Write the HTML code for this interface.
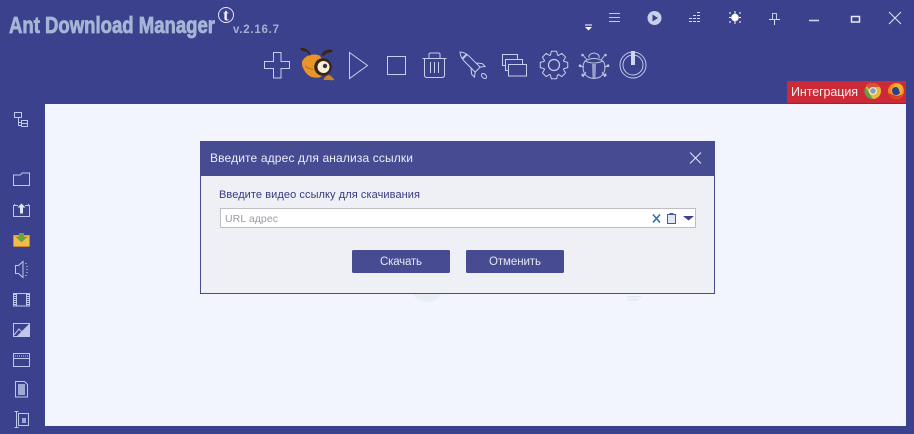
<!DOCTYPE html>
<html><head><meta charset="utf-8"><style>
html,body{margin:0;padding:0;width:914px;height:434px;overflow:hidden;background:#3c418d}
svg{display:block}
text{font-family:"Liberation Sans","Noto Sans CJK SC",sans-serif}
</style></head><body>
<svg width="914" height="434" viewBox="0 0 914 434" xmlns="http://www.w3.org/2000/svg">
<rect width="914" height="434" fill="#3c418d"/>
<rect x="45" y="104" width="861" height="322" fill="#f2f5fe"/>
<circle cx="427" cy="285" r="17" fill="#e9edf4"/>
<rect x="627" y="296" width="14" height="1.5" fill="#e4e8f0"/>
<rect x="627" y="299" width="12" height="1.5" fill="#e4e8f0"/>

<!-- title -->
<text x="9" y="33" font-size="23.500" font-weight="bold" fill="#a5b5d6" stroke="#a5b5d6" stroke-width=".8" textLength="206" lengthAdjust="spacingAndGlyphs">Ant Download Manager</text>
<circle cx="226" cy="15" r="7.500" fill="none" stroke="#e6eaf6" stroke-width="1"/>
<text x="226" y="20.500" font-size="17" font-weight="bold" fill="#eef0fa" text-anchor="middle" style="font-family:'Liberation Serif',serif">t</text>
<text x="233" y="33" font-size="11.500" font-weight="bold" fill="#a5b0cc" textLength="46">v.2.16.7</text>

<!-- window controls -->
<g stroke="#c3cae6" fill="none" stroke-width="1">
<path d="M609 13.500h11M609 17.500h11M609 21.500h11"/>
<path d="M689 21.500h3M693 21.500h3M697 21.500h3M689 18.500h3M693 18.500h3M697 18.500h3M693 15.500h3M697 15.500h3M697 12.500h3" stroke="#d6dbef"/>
<path d="M730 12v2M735 11v3M740 12v2M729 17.500h2M739 17.500h2M730 21v2M735 21v3M740 21v2" stroke="#fff"/>
<path d="M769 19.500h11M774.500 20v5" stroke="#e0e4f4"/>
<rect x="772.500" y="13.500" width="4" height="6"/>
<path d="M809 20.500h10" stroke="#d0d6ec" stroke-width="1.600"/>
<rect x="851.500" y="16.500" width="8" height="5.500" stroke="#e6eaf8" stroke-width="1.500"/>
<path d="M889 12l12 12M901 12l-12 12" stroke="#dfe3f4" stroke-width="1"/>
</g>
<path d="M585 24.500h7v1h-7zM585 27h7l-3.500 3.500z" fill="#fff"/>
<circle cx="654.500" cy="18" r="7" fill="#c8cfe8"/>
<path d="M652.500 14.500l5.500 3.500-5.500 3.500z" fill="#3c418d"/>
<circle cx="735" cy="17.500" r="3.800" fill="#fff"/>

<!-- toolbar -->
<g fill="none" stroke="#c7cfec" stroke-width="1">
<path d="M273.500 52.500h7.500v9h8.500v7h-8.500v9.500h-7.500v-9.500h-9v-7h9z"/>
<path d="M349.500 52.500l18 13-18 13z"/>
<rect x="387.500" y="56.500" width="18" height="18"/>
<path d="M422.500 58.500h24M429 58v-3.500q0-1.500 1.500-1.500h8q1.500 0 1.500 1.500v3.500M424.500 59v16q0 2.500 2.500 2.500h15q2.500 0 2.500-2.500v-16M430.500 62v11M434.500 62v11M438.500 62v11"/>
<g transform="translate(472 64) rotate(-45)">
<path d="M0 -17q-3.500 4-3.500 10v15h7v-15q0-6-3.500-10zM-3.500 2l-4 5v4l4-3M3.500 2l4 5v4l-4-3"/>
<path d="M-3.500 -10.500h7" stroke-width="2"/>
<ellipse cx="0" cy="17" rx="2" ry="3"/>
</g>
<rect x="502.500" y="54.500" width="15" height="11" fill="#3c418d"/>
<rect x="505.500" y="59.500" width="17" height="11" fill="#3c418d"/>
<rect x="508.500" y="64.500" width="18" height="11.500" fill="#3c418d"/>
<circle cx="554" cy="65" r="5.500" stroke-width="1.200"/>
<path transform="translate(554 65)" stroke-linejoin="round" d="M9.870 -3.590L13.740 -2.670L13.740 2.670L9.870 3.590L9.520 4.440L11.610 7.830L7.830 11.610L4.440 9.520L3.590 9.870L2.670 13.740L-2.670 13.740L-3.590 9.870L-4.440 9.520L-7.830 11.610L-11.610 7.830L-9.520 4.440L-9.870 3.590L-13.740 2.670L-13.740 -2.670L-9.870 -3.590L-9.520 -4.440L-11.610 -7.830L-7.830 -11.610L-4.440 -9.520L-3.590 -9.870L-2.670 -13.740L2.670 -13.740L3.590 -9.870L4.440 -9.520L7.830 -11.610L11.610 -7.830L9.520 -4.440Z"/>
<g stroke="#bcc4e4">
<path d="M589 58q-1-4 5-5 6 1 5 5M585 61q9-5 18 0 2 3 2 6 0 7-5 10-3 1.500-6 1.500t-6-1.500q-5-3-5-10 0-3 2-6z"/>
<path d="M585 61q9 4 18 0"/>
<path d="M587 60l-4-5M601 60l4-5M584 67l-4-1M604 67l4-1M586 72l-3 5M602 72l3 5"/>
<path d="M582 54l1 2M606 54l-1 2M579 65l2 1.500M609 65l-2 1.500M582 76l1.500-2M606 76l-1.500-2" stroke-width="2.400"/>
</g>
<circle cx="633" cy="65" r="13" stroke="#c0c8e6"/>
<circle cx="633" cy="65" r="10" stroke="#c0c8e6"/>
</g>
<rect x="631" y="51" width="4" height="14" fill="#d0d6ea"/>
<path d="M592 64h4l-.5 14h-3z" fill="#b4bcdf" opacity=".75"/>

<!-- ant mascot -->
<path d="M302 62q-.5 3 1.500 7q3 6 8 8q4 1 8 .5l4-3q-2-8 0-14l-4-5q-6-2-11 0q-5 2-6.500 6.500z" fill="#e8952a"/>
<path d="M311 55q-2-5-6-6.500q-3-1-4.500-.5q-.5 2 2 3l3 .5q3 1 4 4z M321 55q2-4 6-5q3-1 5.500 0q0 2.500-3 2.500q-4 .5-6 3.500z" fill="#3a2415"/>
<circle cx="323" cy="67" r="8.800" fill="#3a2415"/>
<circle cx="323.500" cy="67" r="6" fill="#f7efd8"/>
<circle cx="325" cy="66" r="2.200" fill="#35323a"/>
<path d="M327 75.500q3-1 4.500 1l3 3q-2.500 1.500-5 .5h-6q1-3 3.500-4.500z" fill="#cf7f25"/>
<path d="M305 66q4 3 8 3.500" stroke="#b46f1e" fill="none"/>

<!-- integration -->
<rect x="787" y="81" width="119" height="22" fill="#cb2a36"/>
<text x="791" y="96" font-size="12.500" fill="#fbeeee" textLength="67">Интеграция</text>
<circle cx="873" cy="91" r="8" fill="#e8b838"/>
<path d="M873 83a8 8 0 0 1 7 4h-7a4 4 0 0 0-4 2l-3-4a8 8 0 0 1 7-2z" fill="#d8503c"/>
<path d="M865.500 87l4 7 3.500 5a8 8 0 0 1-7.500-12z" fill="#5aa04a"/>
<circle cx="873" cy="91" r="3.800" fill="#fff"/><circle cx="873" cy="91" r="2.900" fill="#8a9cc0"/>
<circle cx="896" cy="91" r="8" fill="#ee8a20"/>
<path d="M896 83a8 8 0 0 1 7 4l-1 6a6 6 0 0 1-10 1l-1-5z" fill="#f5b030"/>
<path d="M892 91a3.500 3.500 0 0 1 7-1l1 3a5 5 0 0 1-7 1z" fill="#2c3f8e"/>
<path d="M888 93a8 8 0 0 0 15 1q-5 3-9 1-3-1-6-2z" fill="#e23a20"/>

<!-- sidebar -->
<g fill="none" stroke="#bfc8ea" stroke-width="1">
<rect x="14.500" y="112.500" width="7" height="5"/><path d="M18.500 118v7.500h3M18.500 122.500h3"/><rect x="21.500" y="120.500" width="6" height="3"/><rect x="21.500" y="123.500" width="6" height="3"/>
<path d="M13.500 185.500v-10.500h7l1.500-2h7.500v12.500z"/>
<path d="M18 205.500l-4.500 0v11h16v-11h-4.500"/><path d="M14 205.500l1-1.500M29 205.500l-1-1.500"/>
<path d="M15.500 265.500v8h3l4.500 4v-16l-4.500 4z"/>
<path d="M26 263v1M27 266v1M27 269v1M27 272v1M26 275v1" stroke-width="1.200"/>
<rect x="13.500" y="293.500" width="16" height="12.500"/><path d="M16.500 293.500v12.500M26.500 293.500v12.500"/>
<path d="M15 294v12M28 294v12" stroke-dasharray="1 1" stroke-width="2"/>
<rect x="13.500" y="323.500" width="16" height="13"/>
<path d="M14 335l5-6 3 3 3-2 4 5"/>
<rect x="13.500" y="353.500" width="16" height="13"/><path d="M14 358.500h15"/><path d="M15 356h13" stroke-dasharray="1 1"/>
<path d="M15.500 381.500h9l3 3v12.500h-12z"/>
<path d="M14.500 411.500h4M14.500 427.500h4M16.500 412v15M18.500 413.500h10v12h-10z"/>
</g>
<path d="M21.500 203.500l4 4h-2.500v6h-3v-6h-2.500z" fill="#e2e7f8"/>
<path d="M29.500 323.500v13h-13z" fill="#bfc8ea"/>
<rect x="18" y="384" width="7" height="11" fill="#9ea8d6"/>
<rect x="22" y="418" width="4" height="5" fill="#9ea8d6"/>
<rect x="13.500" y="235.500" width="16" height="11" rx="1" fill="#f2bb4e" stroke="#c88a30"/>
<path d="M13 235l8.500 7 8.500-7z" fill="#e6a33a"/>
<path d="M19 233h5v4h3l-5.500 5.500L16 237h3z" fill="#62a83c"/>

<!-- dialog -->
<rect x="200.500" y="141.500" width="514" height="152" fill="#eff0f5" stroke="#464b92"/>
<rect x="200" y="141" width="515" height="35" fill="#464b92"/>
<text x="210" y="162" font-size="12" fill="#eceef8" textLength="203">Введите адрес для анализа ссылки</text>
<path d="M690 152.500l11 11M701 152.500l-11 11" stroke="#e8eaf6" fill="none"/>
<text x="219" y="198" font-size="11" fill="#353a80" textLength="201">Введите видео ссылку для скачивания</text>
<rect x="220.500" y="208.500" width="475" height="19" fill="#fff" stroke="#bcbec4"/>
<text x="225" y="222" font-size="10.500" fill="#9a9ca2" textLength="53">URL адрес</text>
<path d="M653 214.500l7 8M660 214.500l-7 8" stroke="#2f6fb4" stroke-width="1.600" fill="none"/>
<rect x="667.500" y="214.500" width="8" height="9" fill="#dfe6f4" stroke="#4a5a98"/>
<rect x="669.500" y="213" width="4" height="2" fill="#4a5a98"/>
<path d="M683 216h11l-5.500 4.500z" fill="#3c418d"/>
<rect x="352" y="250" width="98" height="23" rx="1.500" fill="#464b92"/>
<rect x="466" y="250" width="98" height="23" rx="1.500" fill="#464b92"/>
<text x="401" y="265" font-size="11.500" fill="#e4e6f4" text-anchor="middle" textLength="42">Скачать</text>
<text x="515" y="265" font-size="11.500" fill="#e4e6f4" text-anchor="middle" textLength="52">Отменить</text>
</svg>
</body></html>
